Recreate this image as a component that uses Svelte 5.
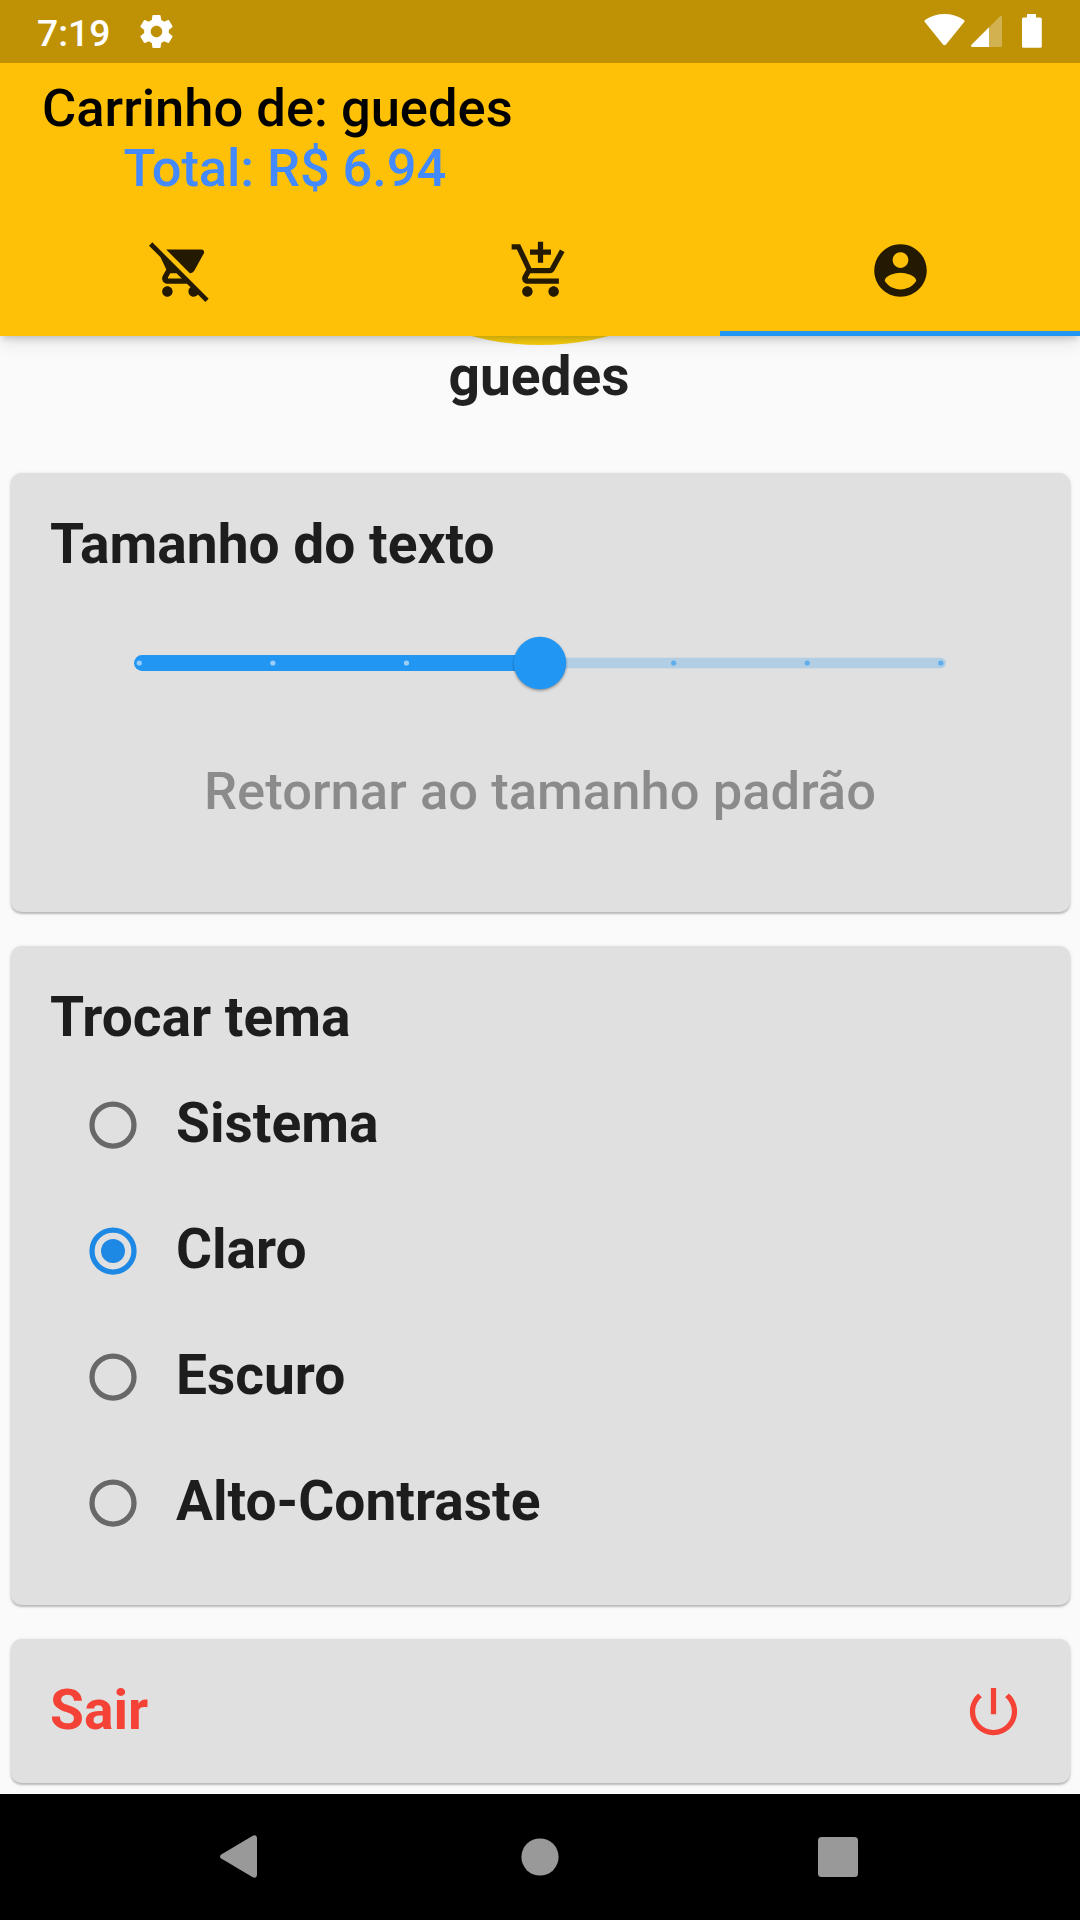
<script>
  const themes = ['Sistema', 'Claro', 'Escuro', 'Alto-Contraste'];
  let selected = $state('Claro');
  const ticks = [0, 1, 2, 3, 4, 5, 6];
  const value = 3;
</script>

<div class="screen">
  <div class="status">
    <span class="clock">7:19</span>
    <svg class="gear" viewBox="2 2 20 20" width="33" height="33"><path fill="#fff" d="M19.43 12.98c.04-.32.07-.64.07-.98s-.03-.66-.07-.98l2.11-1.65c.19-.15.24-.42.12-.64l-2-3.46c-.12-.22-.39-.3-.61-.22l-2.49 1c-.52-.4-1.08-.73-1.69-.98l-.38-2.65C14.46 2.18 14.25 2 14 2h-4c-.25 0-.46.18-.49.42l-.38 2.65c-.61.25-1.17.59-1.69.98l-2.49-1c-.23-.09-.49 0-.61.22l-2 3.46c-.13.22-.07.49.12.64l2.11 1.65c-.04.32-.07.65-.07.98s.03.66.07.98l-2.11 1.65c-.19.15-.24.42-.12.64l2 3.46c.12.22.39.3.61.22l2.49-1c.52.4 1.08.73 1.69.98l.38 2.65c.03.24.24.42.49.42h4c.25 0 .46-.18.49-.42l.38-2.65c.61-.25 1.17-.59 1.69-.98l2.49 1c.23.09.49 0 .61-.22l2-3.46c.12-.22.07-.49-.12-.64l-2.11-1.65zM12 15.500c-1.930 0-3.500-1.570-3.500-3.500s1.570-3.500 3.500-3.500 3.500 1.570 3.500 3.500-1.570 3.500-3.500 3.500z"/></svg>
    <svg class="indicators" viewBox="0 0 120 36" width="120" height="36">
      <path fill="#fff" d="M1.2 9.6C.2 8.800.2 7.600 1.300 6.800 7 2.800 13.600 1 20.500 1S34 2.800 39.700 6.800c1.100.8 1.100 2 .1 2.800L22 31.600c-.9 1-2.100 1-3 0z"/>
      <path fill="#fff" fill-opacity=".3" d="M65 14.500 75.800 3.600C76.800 2.600 78 3 78 4.500V32.500q0 1.500-1.500 1.500H65z"/>
      <path fill="#fff" d="M65 14.200V34H48.500C47 34 46.600 32.700 47.500 31.700z"/>
      <path fill="#fff" d="M103 4.500V1h9v3.500h4.300q1.500 0 1.500 1.500v27.300q0 1.500-1.500 1.500H99.500q-1.500 0-1.500-1.500V6q0-1.500 1.500-1.500z"/>
    </svg>
  </div>

  <header class="appbar">
    <div class="heading">
      <div>Carrinho de: guedes</div>
      <div class="total">Total: R$ 6.94</div>
    </div>
    <nav class="tabs">
      <div class="tab">
        <svg viewBox="0 0 24 24"><path d="M22.730 22.730L2.770 2.770 2 2l-.73-.73L0 2.540l4.390 4.390 2.210 4.660-1.350 2.450c-.16.28-.25.61-.25.96 0 1.100.9 2 2 2h7.460l1.380 1.380c-.5.36-.83.95-.83 1.620 0 1.100.89 2 1.990 2 .67 0 1.260-.33 1.620-.84L21.460 24l1.270-1.270zM7.420 15c-.14 0-.25-.11-.25-.25l.03-.12.9-1.630h2.360l2 2H7.420zm8.130-2c.75 0 1.410-.41 1.750-1.030l3.580-6.490c.08-.14.12-.31.12-.48 0-.55-.45-1-1-1H6.540l9.010 9zM7 18c-1.100 0-1.990.9-1.990 2S5.900 22 7 22s2-.9 2-2-.9-2-2-2z"/></svg>
      </div>
      <div class="tab">
        <svg viewBox="0 0 24 24"><path d="M11 9h2V6h3V4h-3V1h-2v3H8v2h3v3zm-4 9c-1.100 0-1.990.9-1.990 2S5.900 22 7 22s2-.9 2-2-.9-2-2-2zm10 0c-1.100 0-1.990.9-1.990 2s.89 2 1.990 2 2-.9 2-2-.9-2-2-2zm-9.830-3.250l.03-.12.9-1.630h7.450c.75 0 1.410-.41 1.750-1.030l3.860-7.010L19.420 4h-.01l-1.100 2-2.760 5H8.530l-.13-.27L6.160 6l-.95-2-.94-2H1v2h2l3.600 7.590-1.350 2.450c-.16.28-.25.61-.25.96 0 1.100.9 2 2 2h12v-2H7.420c-.13 0-.25-.11-.25-.25z"/></svg>
      </div>
      <div class="tab active">
        <svg viewBox="0 0 24 24"><path d="M12 2C6.480 2 2 6.480 2 12s4.480 10 10 10 10-4.480 10-10S17.520 2 12 2zm0 3c1.660 0 3 1.340 3 3s-1.340 3-3 3-3-1.340-3-3 1.340-3 3-3zm0 14.200c-2.500 0-4.710-1.280-6-3.220.03-1.990 4-3.080 6-3.080 1.990 0 5.970 1.090 6 3.080-1.290 1.940-3.500 3.220-6 3.220z"/></svg>
      </div>
    </nav>
  </header>

  <main>
    <div class="avatar-clip"><div class="avatar"></div></div>
    <div class="name">guedes</div>

    <section class="card size">
      <h2>Tamanho do texto</h2>
      <div class="slider">
        <svg viewBox="0 0 812 60" width="812" height="60">
          <defs><filter id="soft" x="-30%" y="-30%" width="160%" height="160%"><feGaussianBlur stdDeviation="1.8"/></filter></defs>
          <path class="rest" d="M406 24.750H806.700a5.250 5.250 0 0 1 0 10.500H406z"/>
          <path class="fill" d="M406 22.100H7.900a7.900 7.900 0 0 0 0 15.800H406z"/>
          {#each ticks as t}
            {#if t !== value}
              <circle class={t < value ? 'tick-on' : 'tick-off'} cx={5.25 + t * 133.6} cy="30" r="2.6"/>
            {/if}
          {/each}
          <circle cx="406" cy="31.500" r="26" fill="#000" fill-opacity=".4" filter="url(#soft)"/>
          <circle class="fill" cx="406" cy="30" r="26.25"/>
        </svg>
      </div>
      <div class="reset">Retornar ao tamanho padrão</div>
    </section>

    <section class="card theme">
      <h2>Trocar tema</h2>
      {#each themes as t}
        <div class="option">
          <svg class:on={t === selected} viewBox="0 0 48 48" width="48" height="48">
            <circle class="ring" cx="24" cy="24" r="21"/>
            {#if t === selected}<circle class="dot" cx="24" cy="24" r="12"/>{/if}
          </svg>
          <span>{t}</span>
        </div>
      {/each}
    </section>

    <section class="card exit">
      <span>Sair</span>
      <svg viewBox="0 0 24 24" width="63" height="63"><path d="M13 3h-2v10h2V3zm4.830 2.170l-1.420 1.420C17.990 7.860 19 9.810 19 12c0 3.870-3.130 7-7 7s-7-3.130-7-7c0-2.190 1.010-4.140 2.580-5.420L6.170 5.170C4.230 6.820 3 9.260 3 12c0 4.970 4.030 9 9 9s9-4.030 9-9c0-2.740-1.230-5.180-3.170-6.830z"/></svg>
    </section>
  </main>

  <footer>
    <svg viewBox="0 0 38 44" width="38" height="44"><path d="M1.200 19.400 32.400.9C35 -.4 37 .6 37 3.200V39.800C37 42.400 35 43.400 32.400 42.100L1.200 23.600C-.4 22.500-.4 20.500 1.200 19.400z"/></svg>
    <svg class="home" viewBox="0 0 38 38" width="38" height="38"><circle cx="19" cy="19" r="18.600"/></svg>
    <svg viewBox="0 0 40 40" width="40" height="40"><rect width="40" height="40" rx="3.500"/></svg>
  </footer>
</div>

<style>
  :global(body) { margin: 0; }
  .screen {
    width: 1080px; height: 1920px; overflow: hidden;
    display: flex; flex-direction: column;
    background: #fafafa; color: rgba(0, 0, 0, .87);
    font-family: Roboto, sans-serif;
  }
  .status {
    flex: none; height: 63px; box-sizing: border-box;
    position: relative; z-index: 2;
    display: flex; align-items: flex-start;
    background: #bf9105; color: #fff; padding: 13px 37px 0 37px;
  }
  .clock { font-size: 37.3px; font-weight: 500; line-height: 40px; width: 103px; }
  .gear { margin-top: 2px; }
  .indicators { margin-left: auto; margin-right: -.5px; }
  .appbar {
    flex: none; height: 273px; box-sizing: border-box; padding-top: 15px;
    position: relative; z-index: 1;
    background: #ffc107;
    box-shadow: 0 5px 6px -2px rgba(0, 0, 0, .12), 0 2px 18px rgba(0, 0, 0, .17);
  }
  .heading {
    width: max-content; margin-left: 42px; text-align: center;
    font-size: 52.5px; font-weight: 500; line-height: 60px; color: #000;
    white-space: nowrap;
  }
  .total { color: #448aff; padding-left: 15px; letter-spacing: -.1px; }
  .tabs { display: grid; grid-template-columns: repeat(3, 1fr); height: 138px; }
  .tab {
    display: flex; justify-content: center; box-sizing: border-box;
    padding-top: 41px; border-bottom: 5.25px solid transparent;
  }
  .tab svg { width: 63px; height: 63px; fill: #231a01; }
  .active { border-bottom-color: #2196f3; }
  main { flex: 1; display: flex; flex-direction: column; min-height: 0; }
  .avatar-clip {
    flex: none; height: 9px; overflow: hidden;
    display: flex; justify-content: center; align-items: flex-end;
  }
  .avatar { flex: none; width: 530px; height: 530px; border-radius: 50%; background: #fad00f; }
  .name {
    font-size: 55.1px; font-weight: 700; line-height: 62px; text-align: center;
    padding-right: 2px; margin-bottom: 66px;
  }
  .card {
    flex: none; box-sizing: border-box; margin: 0 10.5px; border-radius: 10.5px;
    background: #e0e0e0;
    box-shadow: 0 2px 2px rgba(0, 0, 0, .2), 0 1px 4px rgba(0, 0, 0, .12);
  }
  h2 { margin: 0; font-size: 55.1px; font-weight: 700; line-height: 64px; }
  .size { height: 439px; padding: 39px 39.5px 0; margin-bottom: 34px; }
  .slider { height: 126px; margin-top: 24px; display: flex; align-items: center; justify-content: center; }
  .slider svg { overflow: visible; }
  .fill { fill: #2196f3; }
  .rest { fill: rgba(33, 150, 243, .24); }
  .tick-on { fill: rgba(255, 255, 255, .54); }
  .tick-off { fill: rgba(33, 150, 243, .58); }
  .reset {
    margin-top: 35px; text-align: center;
    font-size: 52.5px; font-weight: 500; line-height: 60px; letter-spacing: .05px;
    color: rgba(0, 0, 0, .38); white-space: nowrap;
  }
  .theme { height: 659px; padding: 39px 39.5px 0; margin-bottom: 34px; }
  .theme h2 { margin-bottom: 13px; }
  .option { height: 126px; display: flex; align-items: center; padding-left: 38.7px; font-size: 55.1px; font-weight: 700; }
  .option span { line-height: 64px; margin-left: 39.3px; padding-bottom: 4px; }
  .ring { fill: none; stroke: #686868; stroke-width: 5.25; }
  .on .ring { stroke: #1e88e5; }
  .dot { fill: #1e88e5; }
  .exit {
    height: 144px; padding: 0 44.7px 0 39.5px; color: #f44336;
    display: flex; align-items: center; justify-content: space-between;
    font-size: 55.1px; font-weight: 700;
  }
  .exit span { line-height: 64px; padding-bottom: 2px; }
  .exit svg { fill: #f44336; }
  footer {
    flex: none; height: 126px; box-sizing: border-box;
    position: relative; z-index: 1;
    background: #000; padding: 0 222px 0 220px;
    display: flex; align-items: center; justify-content: space-between;
  }
  footer svg { fill: #999; }
  .home { margin-left: 3px; }
</style>
